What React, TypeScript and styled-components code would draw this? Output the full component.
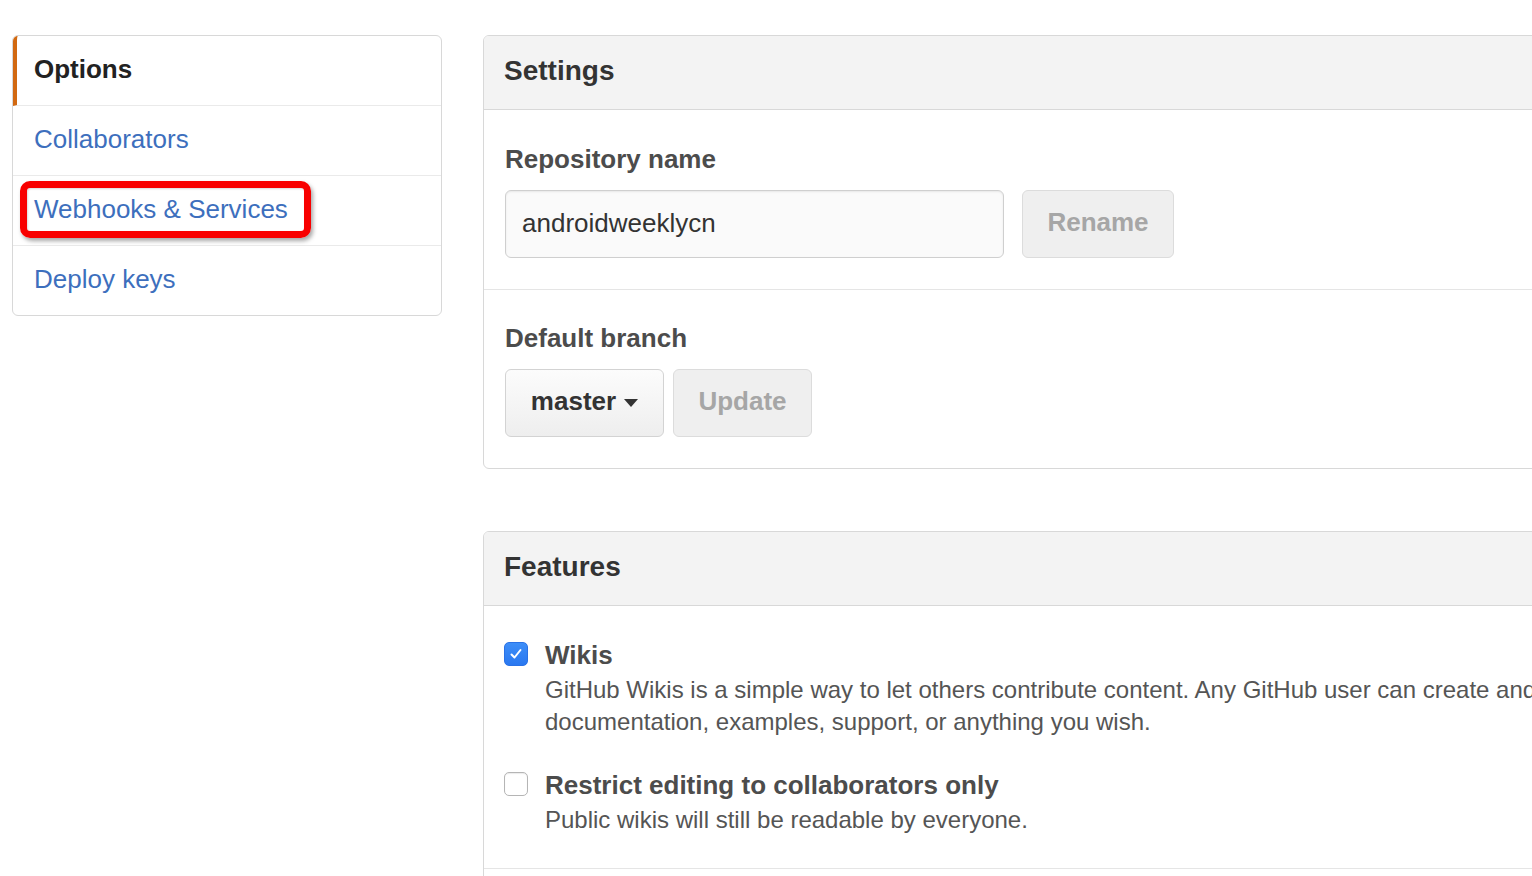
import React from "react";
import styled, { createGlobalStyle } from "styled-components";

const Global = createGlobalStyle`
  html, body { margin: 0; padding: 0; background: #fff; overflow: hidden; }
  body {
    font-family: "Liberation Sans", Arial, Helvetica, sans-serif;
    color: #333;
    -webkit-font-smoothing: antialiased;
  }
  * { box-sizing: border-box; }
`;

const Page = styled.div`
  display: flex;
  align-items: flex-start;
  gap: 41px;
  padding: 35px 0 0 12px;
  width: 2000px;
`;

const Sidebar = styled.nav`
  width: 430px;
  flex: none;
  border: 1px solid #d8d8d8;
  border-radius: 6px;
  background: #fff;
  display: flex;
  flex-direction: column;
`;

const NavItem = styled.a<{ $selected?: boolean }>`
  position: relative;
  display: flex;
  align-items: center;
  height: 70px;
  padding-left: ${(p) => (p.$selected ? "17px" : "21px")};
  padding-bottom: 2px;
  border-left: ${(p) => (p.$selected ? "4px solid #d26911" : "none")};
  border-bottom: 1px solid #eaeaea;
  font-size: 26px;
  font-weight: ${(p) => (p.$selected ? 700 : 400)};
  color: ${(p) => (p.$selected ? "#222" : "#3d6fbd")};
  text-decoration: none;
  &:first-child { border-top-left-radius: 5px; }
  &:last-child { border-bottom: none; height: 69px; }
`;

const Highlight = styled.span`
  position: absolute;
  left: 7px;
  top: 5px;
  width: 291px;
  height: 57px;
  border: 7px solid #f80000;
  border-radius: 10px;
  box-shadow: 2px 3px 4px rgba(0, 0, 0, 0.35), inset 1px 1px 2px rgba(0, 0, 0, 0.15);
  pointer-events: none;
`;

const Main = styled.div`
  width: 1240px;
  flex: none;
  display: flex;
  flex-direction: column;
  gap: 62px;
`;

const Panel = styled.section`
  border: 1px solid #d8d8d8;
  border-radius: 6px;
  background: #fff;
`;

const PanelHeader = styled.h3`
  margin: 0;
  height: 74px;
  display: flex;
  align-items: center;
  padding: 0 0 4px 20px;
  background: #f3f3f3;
  border-bottom: 1px solid #d8d8d8;
  border-radius: 5px 5px 0 0;
  font-size: 28px;
  font-weight: 700;
  color: #333;
`;

const Section = styled.div<{ $pt?: number; $pb?: number; $pl?: number; $last?: boolean }>`
  padding: ${(p) => p.$pt ?? 30}px 20px ${(p) => p.$pb ?? 31}px ${(p) => p.$pl ?? 21}px;
  border-bottom: ${(p) => (p.$last ? "none" : "1px solid #e5e5e5")};
`;

const EmptySection = styled.div`
  height: 60px;
`;

const Label = styled.label`
  display: block;
  font-size: 26px;
  line-height: 36px;
  font-weight: 700;
  color: #4c4c4c;
  margin-bottom: 13px;
`;

const Row = styled.div`
  display: flex;
  align-items: center;
`;

const TextInput = styled.div`
  width: 499px;
  height: 68px;
  display: flex;
  align-items: center;
  padding: 0 0 2px 16px;
  background: #fafafa;
  border: 1px solid #cfcfcf;
  border-radius: 6px;
  box-shadow: inset 0 1px 2px rgba(0, 0, 0, 0.075);
  font-size: 26px;
  color: #333;
`;

const Button = styled.button<{ $disabled?: boolean; $w: number; $ml: number }>`
  width: ${(p) => p.$w}px;
  height: 68px;
  margin-left: ${(p) => p.$ml}px;
  display: flex;
  align-items: center;
  justify-content: center;
  gap: 8px;
  font-family: inherit;
  font-size: 26px;
  font-weight: 700;
  border-radius: 6px;
  color: ${(p) => (p.$disabled ? "#a6a6a6" : "#333")};
  border: 1px solid ${(p) => (p.$disabled ? "#dcdcdc" : "#d3d3d3")};
  background: ${(p) =>
    p.$disabled ? "#efefef" : "linear-gradient(#fcfcfc, #eeeeee)"};
  padding: 0 0 3px 0;
`;

const Caret = styled.span`
  display: inline-block;
  width: 0;
  height: 0;
  border-left: 7px solid transparent;
  border-right: 7px solid transparent;
  border-top: 8px solid #333;
  margin-top: 3px;
`;

const Feature = styled.div<{ $mt?: number }>`
  display: grid;
  grid-template-columns: 24px 1fr;
  column-gap: 17px;
  margin-top: ${(p) => p.$mt ?? 0}px;
`;

const Box = styled.span<{ $checked?: boolean }>`
  width: 24px;
  height: 24px;
  margin-top: 3px;
  border-radius: 5px;
  display: flex;
  align-items: center;
  justify-content: center;
  background: ${(p) => (p.$checked ? "linear-gradient(#3d8ef8, #2a78f0)" : "#fff")};
  border: 1px solid ${(p) => (p.$checked ? "#2a72e6" : "#b5b5b5")};
  box-shadow: ${(p) => (p.$checked ? "none" : "inset 0 1px 1px rgba(0,0,0,0.08)")};
`;

const FeatureTitle = styled.div`
  font-size: 26px;
  line-height: 32px;
  font-weight: 700;
  color: #4c4c4c;
  margin-bottom: 3px;
`;

const FeatureDesc = styled.div`
  font-size: 24px;
  line-height: 32px;
  color: #555;
  white-space: nowrap;
`;

const Line = styled.span`
  display: block;
`;

export default function App() {
  return (
    <>
      <Global />
      <Page>
        <Sidebar>
          <NavItem $selected>Options</NavItem>
          <NavItem href="#">Collaborators</NavItem>
          <NavItem href="#">
            Webhooks &amp; Services
            <Highlight />
          </NavItem>
          <NavItem href="#">Deploy keys</NavItem>
        </Sidebar>
        <Main>
          <Panel>
            <PanelHeader>Settings</PanelHeader>
            <Section $pt={31}>
              <Label>Repository name</Label>
              <Row>
                <TextInput>androidweeklycn</TextInput>
                <Button $disabled $w={152} $ml={18}>Rename</Button>
              </Row>
            </Section>
            <Section $last>
              <Label>Default branch</Label>
              <Row>
                <Button $w={159} $ml={0}>
                  master <Caret />
                </Button>
                <Button $disabled $w={139} $ml={9}>Update</Button>
              </Row>
            </Section>
          </Panel>
          <Panel>
            <PanelHeader>Features</PanelHeader>
            <Section $pt={33} $pb={32} $pl={20}>
              <Feature>
                <Box $checked>
                  <svg width="16" height="16" viewBox="0 0 16 16">
                    <path d="M3.5 8.5 L6.5 11.5 L12.5 4" fill="none" stroke="#fff" strokeWidth="2" strokeLinecap="round" strokeLinejoin="round" />
                  </svg>
                </Box>
                <div>
                  <FeatureTitle>Wikis</FeatureTitle>
                  <FeatureDesc>
                    <Line>GitHub Wikis is a simple way to let others contribute content. Any GitHub user can create and edit pages to use for</Line>
                    <Line>documentation, examples, support, or anything you wish.</Line>
                  </FeatureDesc>
                </div>
              </Feature>
              <Feature $mt={31}>
                <Box />
                <div>
                  <FeatureTitle>Restrict editing to collaborators only</FeatureTitle>
                  <FeatureDesc>
                    <Line>Public wikis will still be readable by everyone.</Line>
                  </FeatureDesc>
                </div>
              </Feature>
            </Section>
            <EmptySection />
          </Panel>
        </Main>
      </Page>
    </>
  );
}
